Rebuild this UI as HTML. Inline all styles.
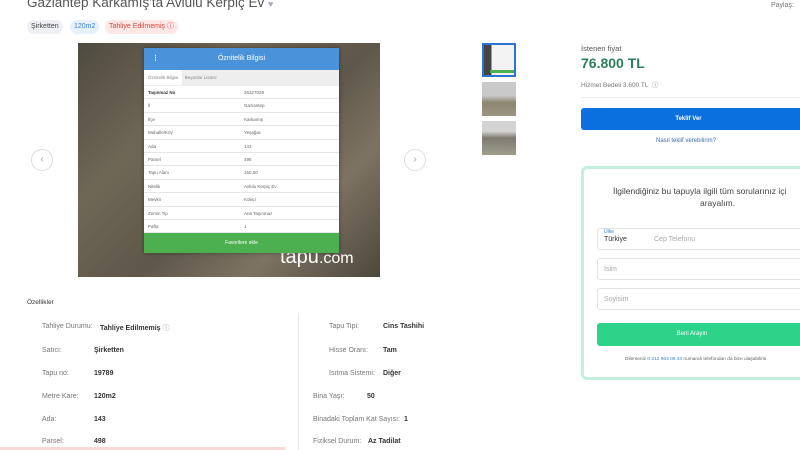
<!DOCTYPE html><html><head><meta charset="utf-8"><style>
*{margin:0;padding:0;box-sizing:border-box}
body{width:800px;height:450px;overflow:hidden;background:#fff;font-family:"Liberation Sans",sans-serif;color:#333;position:relative}
.a{position:absolute}
.tag{position:absolute;top:20px;height:14px;border-radius:7px;font-size:7px;line-height:14px;padding:0 4px}
.row{position:absolute;left:0;width:195px;height:13.4px;border-bottom:1px solid #e6e6e6;font-size:4.5px;line-height:13px;color:#666}
.row span{position:absolute;left:4px}.row b{position:absolute;left:100px;font-weight:normal}
.lbl{position:absolute;font-size:7px;color:#777}.val{position:absolute;font-size:7px;font-weight:bold;color:#333}
.inp{position:absolute;left:597px;width:210px;height:22px;border:1px solid #e3e3e3;border-radius:3px;font-size:7px;color:#aaa;padding-left:6px;line-height:22px}
</style></head><body>
<div class="a" style="left:27px;top:-5px;font-size:13.5px;color:#555">Gaziantep Karkamış'ta Avlulu Kerpiç Ev <span style="color:#aab;font-size:9px">♥</span></div>
<div class="a" style="left:771px;top:2px;font-size:7px;color:#777">Paylaş:</div>
<div class="tag" style="left:27px;background:#eef0f3;color:#444">Şirketten</div>
<div class="tag" style="left:70px;background:#e6f1fc;color:#3a82d6">120m2</div>
<div class="tag" style="left:105px;background:#fde8e6;color:#d9453c">Tahliye Edilmemiş ⓘ</div>
<div class="a" style="left:78px;top:43px;width:302px;height:234px;background:linear-gradient(135deg,#4f4a40,#6f6756 30%,#5e574a 55%,#7d7362 75%,#4d473d)"></div>
<div class="a" style="left:280px;top:246px;font-size:20px;color:#fff">tapu<span style="font-size:16px">.com</span></div>
<div class="a" style="left:144px;top:48px;width:195px;height:205px;background:#fff;box-shadow:0 0 4px rgba(0,0,0,.4)">
 <div class="a" style="left:0;top:0;width:195px;height:22px;background:#4a93da;color:#fff;font-size:7px;text-align:center;line-height:22px">Öznitelik Bilgisi<span style="position:absolute;left:8px;font-weight:bold">⋮</span></div>
 <div class="a" style="left:0;top:22px;width:195px;height:16px;background:#eee;font-size:4.5px;color:#888;line-height:16px"><span style="background:#fff;padding:5px 4px">Öznitelik Bilgisi</span> &nbsp;Beyanlar Listesi</div>
 <div class="a" style="left:0;top:38px;width:195px;height:147px">
 <div class="row" style="top:0"><span style="color:#333;font-weight:bold">Taşınmaz No</span><b>26327029</b></div>
 <div class="row" style="top:13.4px"><span>İl</span><b>Gaziantep</b></div>
 <div class="row" style="top:26.8px"><span>İlçe</span><b>Karkamış</b></div>
 <div class="row" style="top:40.2px"><span>Mahalle/Köy</span><b>Yeşağac</b></div>
 <div class="row" style="top:53.6px"><span>Ada</span><b>143</b></div>
 <div class="row" style="top:67px"><span>Parsel</span><b>498</b></div>
 <div class="row" style="top:80.4px"><span>Tapu Alanı</span><b>160,00</b></div>
 <div class="row" style="top:93.8px"><span>Nitelik</span><b>Avlulu Kerpiç Ev</b></div>
 <div class="row" style="top:107.2px"><span>Mevkii</span><b>Köiiiçi</b></div>
 <div class="row" style="top:120.6px"><span>Zemin Tip</span><b>Ana Taşınmaz</b></div>
 <div class="row" style="top:134px"><span>Pafta</span><b>1</b></div>
 </div>
 <div class="a" style="left:0;top:185px;width:195px;height:20px;background:#4caf50;color:#fff;font-size:5px;text-align:center;line-height:20px">Favorilere ekle</div>
</div>
<div class="a" style="left:31px;top:149px;width:22px;height:22px;border-radius:50%;background:#fff;border:1px solid #ddd;color:#aaa;font-size:10px;text-align:center;line-height:20px">‹</div>
<div class="a" style="left:404px;top:149px;width:22px;height:22px;border-radius:50%;background:#fff;border:1px solid #ddd;color:#aaa;font-size:10px;text-align:center;line-height:20px">›</div>
<div class="a" style="left:482px;top:43px;width:34px;height:34px;border:2px solid #2d73d0;background:linear-gradient(90deg,#444 25%,#f3f3f3 25%)"><div class="a" style="left:6px;bottom:2px;width:24px;height:3px;background:#4caf50"></div></div>
<div class="a" style="left:482px;top:82px;width:34px;height:34px;background:linear-gradient(#c9c9c9 40%,#8d8770 60%,#9a9482)"></div>
<div class="a" style="left:482px;top:121px;width:34px;height:34px;background:linear-gradient(#d4d4d4 30%,#7e7a70 50%,#a29d8c)"></div>
<div class="a" style="left:581px;top:44px;font-size:7.5px;color:#555">İstenen fiyat</div>
<div class="a" style="left:581px;top:55px;font-size:14px;font-weight:bold;color:#2e7d5a">76.800 TL</div>
<div class="a" style="left:581px;top:79px;font-size:6.5px;color:#777">Hizmet Bedeli 3.600 TL &nbsp;ⓘ</div>
<div class="a" style="left:581px;top:97px;width:219px;height:1px;background:#eee"></div>
<div class="a" style="left:581px;top:108px;width:225px;height:22px;border-radius:3px;background:#0a6fdf;color:#fff;font-size:6px;font-weight:bold;text-align:center;line-height:22px;padding-right:10px">Teklif Ver</div>
<div class="a" style="left:581px;top:138px;width:210px;text-align:center;font-size:6px;color:#3a6fb0">Nasıl teklif verebilirim?</div>
<div class="a" style="left:581px;top:166px;width:230px;height:214px;border:3px solid #c3f0dc;border-radius:6px"></div>
<div class="a" style="left:613px;top:186px;font-size:8.5px;color:#444;white-space:nowrap">İlgilendiğiniz bu tapuyla ilgili tüm sorularınız içi</div>
<div class="a" style="left:700px;top:198px;font-size:8.5px;color:#444">arayalım.</div>
<div class="inp" style="top:228px"><span style="position:absolute;left:6px;top:-8px;font-size:5px;color:#3a82d6">Ülke</span><span style="color:#333">Türkiye</span><span style="position:absolute;left:56px">Cep Telefonu</span></div>
<div class="inp" style="top:258px">İsim</div>
<div class="inp" style="top:288px">Soyisim</div>
<div class="a" style="left:597px;top:323px;width:210px;height:23px;border-radius:3px;background:#2ed38a;color:#fff;font-size:6px;text-align:center;line-height:23px;padding-right:20px">Beni Arayın</div>
<div class="a" style="left:625px;top:357px;font-size:4.8px;color:#666;white-space:nowrap">Dilerseniz <span style="color:#3a82d6">0 212 963 06 43</span> numaralı telefondan da bize ulaşabilirsi</div>
<div class="a" style="left:27px;top:299px;font-size:6.5px;color:#333">Özellikler</div>
<div class="a" style="left:298px;top:313px;width:1px;height:137px;background:#e6e6e6"></div>
<div class="lbl" style="left:42px;top:323px">Tahliye Durumu:</div><div class="val" style="left:100px;top:323px">Tahliye Edilmemiş <span style="font-weight:normal;color:#999">ⓘ</span></div>
<div class="lbl" style="left:42px;top:347px">Satıcı:</div><div class="val" style="left:94px;top:347px">Şirketten</div>
<div class="lbl" style="left:42px;top:370px">Tapu no:</div><div class="val" style="left:94px;top:370px">19789</div>
<div class="lbl" style="left:42px;top:393px">Metre Kare:</div><div class="val" style="left:94px;top:393px">120m2</div>
<div class="lbl" style="left:42px;top:416px">Ada:</div><div class="val" style="left:94px;top:416px">143</div>
<div class="lbl" style="left:42px;top:438px">Parsel:</div><div class="val" style="left:94px;top:438px">498</div>
<div class="lbl" style="left:329px;top:323px">Tapu Tipi:</div><div class="val" style="left:383px;top:323px">Cins Tashihi</div>
<div class="lbl" style="left:329px;top:347px">Hisse Oranı:</div><div class="val" style="left:383px;top:347px">Tam</div>
<div class="lbl" style="left:329px;top:370px">Isıtma Sistemi:</div><div class="val" style="left:383px;top:370px">Diğer</div>
<div class="lbl" style="left:313px;top:393px">Bina Yaşı:</div><div class="val" style="left:367px;top:393px">50</div>
<div class="lbl" style="left:313px;top:416px">Binadaki Toplam Kat Sayısı:</div><div class="val" style="left:404px;top:416px">1</div>
<div class="lbl" style="left:313px;top:438px">Fiziksel Durum:</div><div class="val" style="left:368px;top:438px">Az Tadilat</div>
<div class="a" style="left:0;top:447px;width:285px;height:3px;background:#f7d9d6"></div>
</body></html>
